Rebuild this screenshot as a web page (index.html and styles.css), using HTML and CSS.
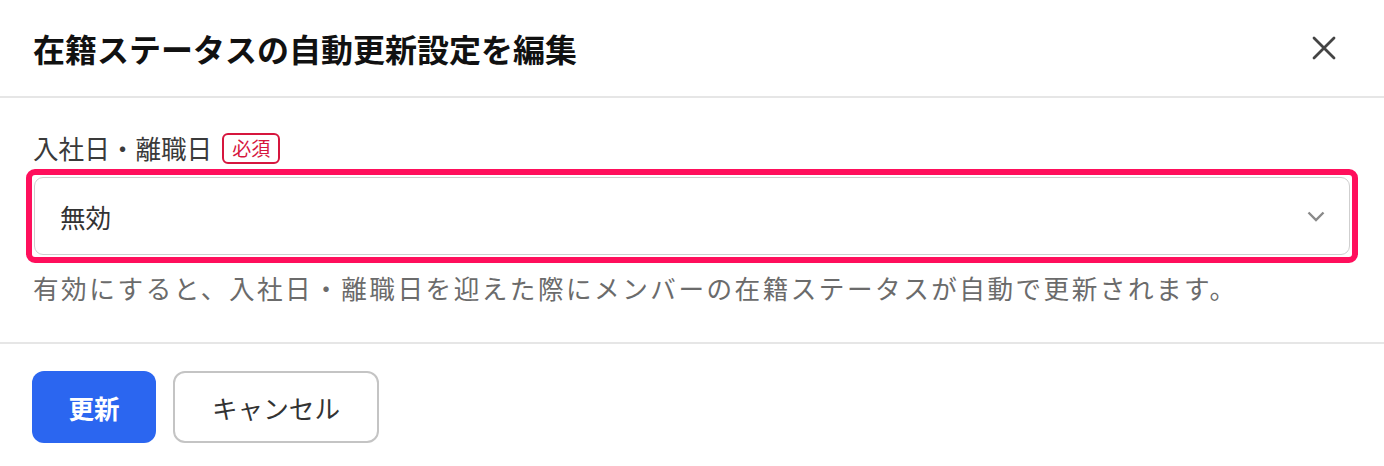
FILE: index.html
```html
<!DOCTYPE html>
<html lang="ja">
<head>
<meta charset="utf-8">
<title>在籍ステータスの自動更新設定を編集</title>
<link rel="stylesheet" href="styles.css">
</head>
<body>
<div class="dialog">
  <header class="dialog-header">
    <h1 class="dialog-title">在籍ステータスの自動更新設定を編集</h1>
    <button class="close-btn" aria-label="閉じる">
      <svg width="24" height="24" viewBox="0 0 24 24"><path d="M2 2 L22 22 M22 2 L2 22" stroke="#444" stroke-width="2.8" stroke-linecap="round" fill="none"/></svg>
    </button>
  </header>
  <section class="dialog-body">
    <div class="field-label">
      <span class="label-text">入社日・離職日</span>
      <span class="badge">必須</span>
    </div>
    <div class="highlight">
      <div class="select">
        <span class="select-value">無効</span>
        <svg class="chevron" width="18" height="11" viewBox="0 0 18 11"><path d="M1.5 1.5 L9 9 L16.5 1.5" stroke="#8a8a8a" stroke-width="2.4" fill="none"/></svg>
      </div>
    </div>
    <p class="help">有効にすると、入社日・離職日を迎えた際にメンバーの在籍ステータスが自動で更新されます。</p>
  </section>
  <footer class="dialog-footer">
    <button class="btn btn-primary">更新</button>
    <button class="btn btn-secondary">キャンセル</button>
  </footer>
</div>
</body>
</html>
```

FILE: styles.css
```css
html, body {
  margin: 0;
  padding: 0;
  background: #ffffff;
}
body {
  font-family: "Noto Sans CJK JP", "Noto Sans", sans-serif;
  color: #333333;
}
.dialog {
  width: 1384px;
  height: 466px;
  background: #fff;
}
.dialog-header {
  height: 98px;
  box-sizing: border-box;
  display: flex;
  align-items: center;
  justify-content: space-between;
  padding: 0 48px 0 33px;
  border-bottom: 2px solid #e6e6e6;
}
.dialog-title {
  margin: 0;
  font-size: 32px;
  font-weight: 700;
  color: #111;
  line-height: 1;
}
.close-btn {
  background: none;
  border: 0;
  padding: 0;
  width: 24px;
  height: 24px;
  display: flex;
  align-items: center;
  justify-content: center;
  cursor: pointer;
}
.dialog-body {
  padding: 34px 33px 0 33px;
  height: 246px;
  box-sizing: border-box;
  border-bottom: 2px solid #e6e6e6;
}
.field-label {
  display: flex;
  align-items: center;
  gap: 10px;
  height: 32px;
}
.label-text {
  font-size: 25.6px;
  color: #3a3a3a;
  line-height: 32px;
}
.badge {
  font-size: 19px;
  color: #d6163e;
  border: 2px solid #d6163e;
  border-radius: 6px;
  padding: 0 8px;
  line-height: 26px;
  height: 27px;
  display: flex;
  align-items: center;
}
.highlight {
  margin: 5px -7px 0 -7px;
  border: 6px solid #ff0f5c;
  border-radius: 9px;
  padding: 2px;
}
.select {
  height: 78px;
  box-sizing: border-box;
  border: 1.5px solid #cfcfcf;
  border-radius: 9px;
  display: flex;
  align-items: center;
  justify-content: space-between;
  padding: 0 24px 0 25px;
  background: #fff;
}
.select-value {
  font-size: 25.6px;
  color: #333;
}
.chevron {
  display: block;
}
.help {
  margin: 7px 0 0 0;
  font-size: 25.6px;
  letter-spacing: 2.5px;
  color: #6b6b6b;
  line-height: 36px;
}
.dialog-footer {
  display: flex;
  gap: 17px;
  padding: 27px 32px 0 32px;
}
.btn {
  font-family: "Noto Sans CJK JP", "Noto Sans", sans-serif;
  height: 72px;
  border-radius: 12px;
  font-size: 25.6px;
  cursor: pointer;
  box-sizing: border-box;
}
.btn-primary {
  background: #2b66f0;
  color: #fff;
  border: 0;
  font-weight: 700;
  padding: 0 36px;
  width: 124px;
}
.btn-secondary {
  background: #fff;
  color: #333;
  border: 2px solid #c4c4c4;
  padding: 0 36px;
  width: 206px;
}
```
